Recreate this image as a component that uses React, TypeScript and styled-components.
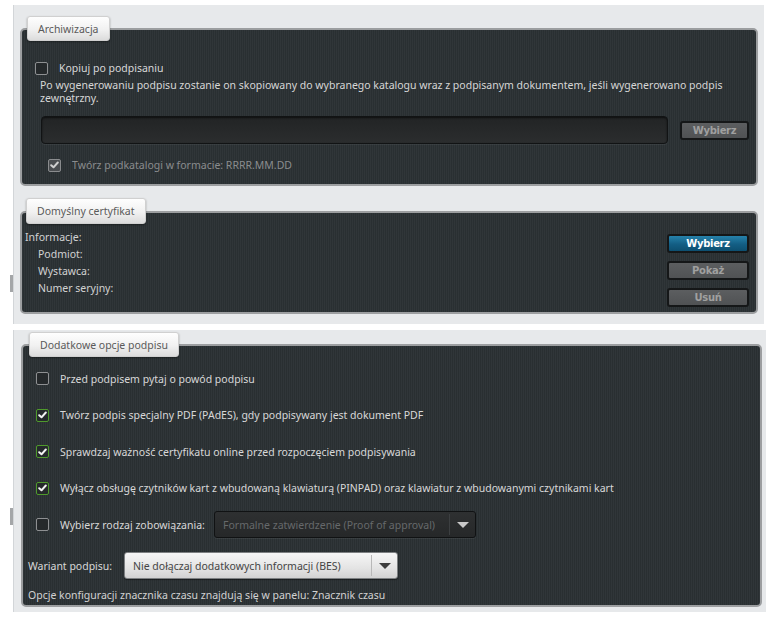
import React from "react";
import styled, { createGlobalStyle } from "styled-components";

const Global = createGlobalStyle`
  html, body { margin: 0; padding: 0; background: #ffffff; }
  body { font-family: "Noto Sans", "Open Sans", sans-serif; font-size: 10.5px; }
  * { box-sizing: border-box; }
`;

const Page = styled.div`
  width: 774px;
  height: 617px;
  padding-top: 5px;
  display: flex;
  flex-direction: column;
  gap: 6px;
`;

const Row = styled.div`
  display: flex;
`;

const Gutter = styled.div<{ $handle: number }>`
  width: 13px;
  flex: none;
  padding-top: ${(p) => p.$handle}px;
  display: flex;
  justify-content: flex-end;
  align-items: flex-start;
`;

const Handle = styled.div`
  width: 3px;
  height: 17px;
  background: #a4a6a8;
`;

const Container = styled.div<{ $w: number; $h: number; $pad: string }>`
  width: ${(p) => p.$w}px;
  height: ${(p) => p.$h}px;
  padding: ${(p) => p.$pad};
  background: #e7e9eb;
  border-left: 1px solid #d2d5d8;
  display: flex;
  flex-direction: column;
`;

const Group = styled.div<{ $mt?: number }>`
  display: flex;
  flex-direction: column;
  margin-top: ${(p) => p.$mt ?? 0}px;
`;

const Tab = styled.div<{ $ml: number; $h: number }>`
  align-self: flex-start;
  position: relative;
  z-index: 1;
  margin-left: ${(p) => p.$ml}px;
  height: ${(p) => p.$h}px;
  padding: 0 10px;
  display: flex;
  align-items: center;
  color: #5a5a5a;
  font-size: 10.5px;
  background: linear-gradient(#fefefe, #f1f1f1 55%, #dcdcdc);
  border: 1px solid #d0d0d0;
  border-radius: 3px;
  box-shadow: 0 1px 2px rgba(0, 0, 0, 0.35);
`;

const Panel = styled.div<{ $h: number }>`
  margin-top: -13px;
  height: ${(p) => p.$h}px;
  border: 2px solid #9c9ea0;
  border-radius: 5px;
  background-color: #2b3134;
  background-image: repeating-linear-gradient(
    90deg,
    rgba(255, 255, 255, 0.025) 0px,
    rgba(255, 255, 255, 0.025) 1px,
    rgba(0, 0, 0, 0.05) 1px,
    rgba(0, 0, 0, 0.05) 2px
  );
  color: #d6d6d6;
  display: flex;
  flex-direction: column;
`;

const CheckRow = styled.div<{ $ml: number; $mt?: number; $h?: number }>`
  display: flex;
  align-items: center;
  gap: 11px;
  margin-left: ${(p) => p.$ml}px;
  margin-top: ${(p) => p.$mt ?? 0}px;
  height: ${(p) => p.$h ?? 14}px;
`;

const BoxEl = styled.span<{ $state: "off" | "on" | "dis" }>`
  width: 13px;
  height: 13px;
  flex: none;
  border-radius: 2px;
  display: flex;
  align-items: center;
  justify-content: center;
  border: 1px solid
    ${(p) => (p.$state === "on" ? "#4f9a2c" : p.$state === "dis" ? "#8a8c8e" : "#8e9092")};
  background: ${(p) => (p.$state === "dis" ? "#4a4d50" : "#25292b")};
`;

const Label = styled.span<{ $dim?: boolean; $w?: number }>`
  color: ${(p) => (p.$dim ? "#8a8c8e" : "#d8d8d8")};
  white-space: nowrap;
  ${(p) => (p.$w ? `width: ${p.$w}px; flex: none;` : "")}
`;

const Check = ({ state }: { state: "off" | "on" | "dis" }) => (
  <BoxEl $state={state}>
    {state !== "off" && (
      <svg width="9" height="8" viewBox="0 0 9 8">
        <polyline
          points="1.2,4.2 3.5,6.3 7.8,1.5"
          fill="none"
          stroke={state === "dis" ? "#d0d0d0" : "#f2f2f2"}
          strokeWidth="2"
          strokeLinecap="round"
          strokeLinejoin="round"
        />
      </svg>
    )}
  </BoxEl>
);

const Para = styled.p`
  margin: 4px 14px 0 18px;
  line-height: 13px;
  color: #d6d6d6;
`;

const InputRow = styled.div`
  display: flex;
  align-items: center;
  gap: 12px;
  margin: 11px 7px 0 19px;
`;

const PathInput = styled.div`
  flex: 1;
  height: 28px;
  border-radius: 4px;
  border: 1px solid #111314;
  background: linear-gradient(#222425, #2b2d2e);
  box-shadow: inset 0 1px 2px rgba(0, 0, 0, 0.6), 0 1px 0 rgba(255, 255, 255, 0.06);
`;

const Btn = styled.div<{ $w: number; $primary?: boolean }>`
  width: ${(p) => p.$w}px;
  height: 19px;
  flex: none;
  border-radius: 3px;
  border: 2px solid #151718;
  display: flex;
  align-items: center;
  justify-content: center;
  font-family: "DejaVu Sans", Verdana, sans-serif;
  font-weight: bold;
  font-size: 10px;
  letter-spacing: -0.3px;
  color: ${(p) => (p.$primary ? "#ffffff" : "#a0a0a0")};
  background: ${(p) =>
    p.$primary
      ? "linear-gradient(#2682ab, #135e84 55%, #0d4f70)"
      : "linear-gradient(#5c5e60, #505254)"};
`;

const CertBody = styled.div`
  display: flex;
  justify-content: space-between;
  flex: 1;
`;

const InfoList = styled.div`
  margin: 16px 0 0 3px;
  display: flex;
  flex-direction: column;
  line-height: 17px;
  color: #d2d2d2;
`;

const InfoItem = styled.div<{ $indent?: boolean }>`
  padding-left: ${(p) => (p.$indent ? 13 : 0)}px;
`;

const BtnCol = styled.div`
  margin: 21px 7px 0 0;
  display: flex;
  flex-direction: column;
  gap: 8px;
`;

const OptList = styled.div`
  margin-top: 19px;
  display: flex;
  flex-direction: column;
  gap: 9.5px;
`;

const Select = styled.div<{ $w: number; $dark?: boolean }>`
  width: ${(p) => p.$w}px;
  height: 27px;
  flex: none;
  border-radius: 3px;
  display: flex;
  align-items: stretch;
  border: 1px solid ${(p) => (p.$dark ? "#101213" : "#7d8082")};
  background: ${(p) =>
    p.$dark ? "linear-gradient(#2e3031, #262829)" : "linear-gradient(#f6f6f6, #e4e4e4 60%, #d2d2d2)"};
  color: ${(p) => (p.$dark ? "#66696b" : "#454545")};
  box-shadow: ${(p) => (p.$dark ? "0 1px 0 rgba(255,255,255,0.06)" : "0 1px 1px rgba(0,0,0,0.4)")};
`;

const SelectText = styled.div`
  flex: 1;
  display: flex;
  align-items: center;
  padding-left: 8px;
  white-space: nowrap;
  overflow: hidden;
`;

const SelectArrow = styled.div<{ $dark?: boolean }>`
  width: 26px;
  flex: none;
  display: flex;
  align-items: center;
  justify-content: center;
  border-left: 1px solid ${(p) => (p.$dark ? "#3c3f41" : "#b8b8b8")};
  margin: 2px 0;
`;

const Triangle = styled.span<{ $dark?: boolean }>`
  width: 0;
  height: 0;
  border-left: 6px solid transparent;
  border-right: 6px solid transparent;
  border-top: 6px solid ${(p) => (p.$dark ? "#c8c8c8" : "#3c3c3c")};
`;

const PlainRow = styled.div<{ $mt: number }>`
  display: flex;
  align-items: center;
  margin: ${(p) => p.$mt}px 0 0 5px;
  min-height: 14px;
`;

const Footer = styled.div`
  margin: 9px 0 0 5px;
  line-height: 14px;
  color: #d2d2d2;
`;

const DropDown = ({ w, dark, text }: { w: number; dark?: boolean; text: string }) => (
  <Select $w={w} $dark={dark}>
    <SelectText>{text}</SelectText>
    <SelectArrow $dark={dark}>
      <Triangle $dark={dark} />
    </SelectArrow>
  </Select>
);

export default function App() {
  return (
    <>
      <Global />
      <Page>
        <Row>
          <Gutter $handle={270}>
            <Handle />
          </Gutter>
          <Container $w={751} $h={319} $pad="11px 6px 0 6px">
            <Group>
              <Tab $ml={7} $h={25}>Archiwizacja</Tab>
              <Panel $h={158}>
                <CheckRow $ml={13} $mt={31}>
                  <Check state="off" />
                  <Label>Kopiuj po podpisaniu</Label>
                </CheckRow>
                <Para>
                  Po wygenerowaniu podpisu zostanie on skopiowany do wybranego katalogu wraz z
                  podpisanym dokumentem, jeśli wygenerowano podpis zewnętrzny.
                </Para>
                <InputRow>
                  <PathInput />
                  <Btn $w={69}>Wybierz</Btn>
                </InputRow>
                <CheckRow $ml={26} $mt={14}>
                  <Check state="dis" />
                  <Label $dim>Twórz podkatalogi w formacie: RRRR.MM.DD</Label>
                </CheckRow>
              </Panel>
            </Group>
            <Group $mt={12}>
              <Tab $ml={6} $h={26}>Domyślny certyfikat</Tab>
              <Panel $h={103}>
                <CertBody>
                  <InfoList>
                    <InfoItem>Informacje:</InfoItem>
                    <InfoItem $indent>Podmiot:</InfoItem>
                    <InfoItem $indent>Wystawca:</InfoItem>
                    <InfoItem $indent>Numer seryjny:</InfoItem>
                  </InfoList>
                  <BtnCol>
                    <Btn $w={82} $primary>Wybierz</Btn>
                    <Btn $w={82}>Pokaż</Btn>
                    <Btn $w={82}>Usuń</Btn>
                  </BtnCol>
                </CertBody>
              </Panel>
            </Group>
          </Container>
        </Row>
        <Row>
          <Gutter $handle={178}>
            <Handle />
          </Gutter>
          <Container $w={753} $h={282} $pad="2px 4px 0 7px">
            <Group>
              <Tab $ml={8} $h={25}>Dodatkowe opcje podpisu</Tab>
              <Panel $h={263}>
                <OptList>
                  <CheckRow $ml={13} $h={27}>
                    <Check state="off" />
                    <Label>Przed podpisem pytaj o powód podpisu</Label>
                  </CheckRow>
                  <CheckRow $ml={13} $h={27}>
                    <Check state="on" />
                    <Label>Twórz podpis specjalny PDF (PAdES), gdy podpisywany jest dokument PDF</Label>
                  </CheckRow>
                  <CheckRow $ml={13} $h={27}>
                    <Check state="on" />
                    <Label>Sprawdzaj ważność certyfikatu online przed rozpoczęciem podpisywania</Label>
                  </CheckRow>
                  <CheckRow $ml={13} $h={27}>
                    <Check state="on" />
                    <Label>
                      Wyłącz obsługę czytników kart z wbudowaną klawiaturą (PINPAD) oraz klawiatur z
                      wbudowanymi czytnikami kart
                    </Label>
                  </CheckRow>
                  <CheckRow $ml={13} $h={27}>
                    <Check state="off" />
                    <Label $w={143}>Wybierz rodzaj zobowiązania:</Label>
                    <DropDown w={262} dark text="Formalne zatwierdzenie (Proof of approval)" />
                  </CheckRow>
                </OptList>
                <PlainRow $mt={14}>
                  <Label $w={96}>Wariant podpisu:</Label>
                  <DropDown w={274} text="Nie dołączaj dodatkowych informacji (BES)" />
                </PlainRow>
                <Footer>Opcje konfiguracji znacznika czasu znajdują się w panelu: Znacznik czasu</Footer>
              </Panel>
            </Group>
          </Container>
        </Row>
      </Page>
    </>
  );
}
